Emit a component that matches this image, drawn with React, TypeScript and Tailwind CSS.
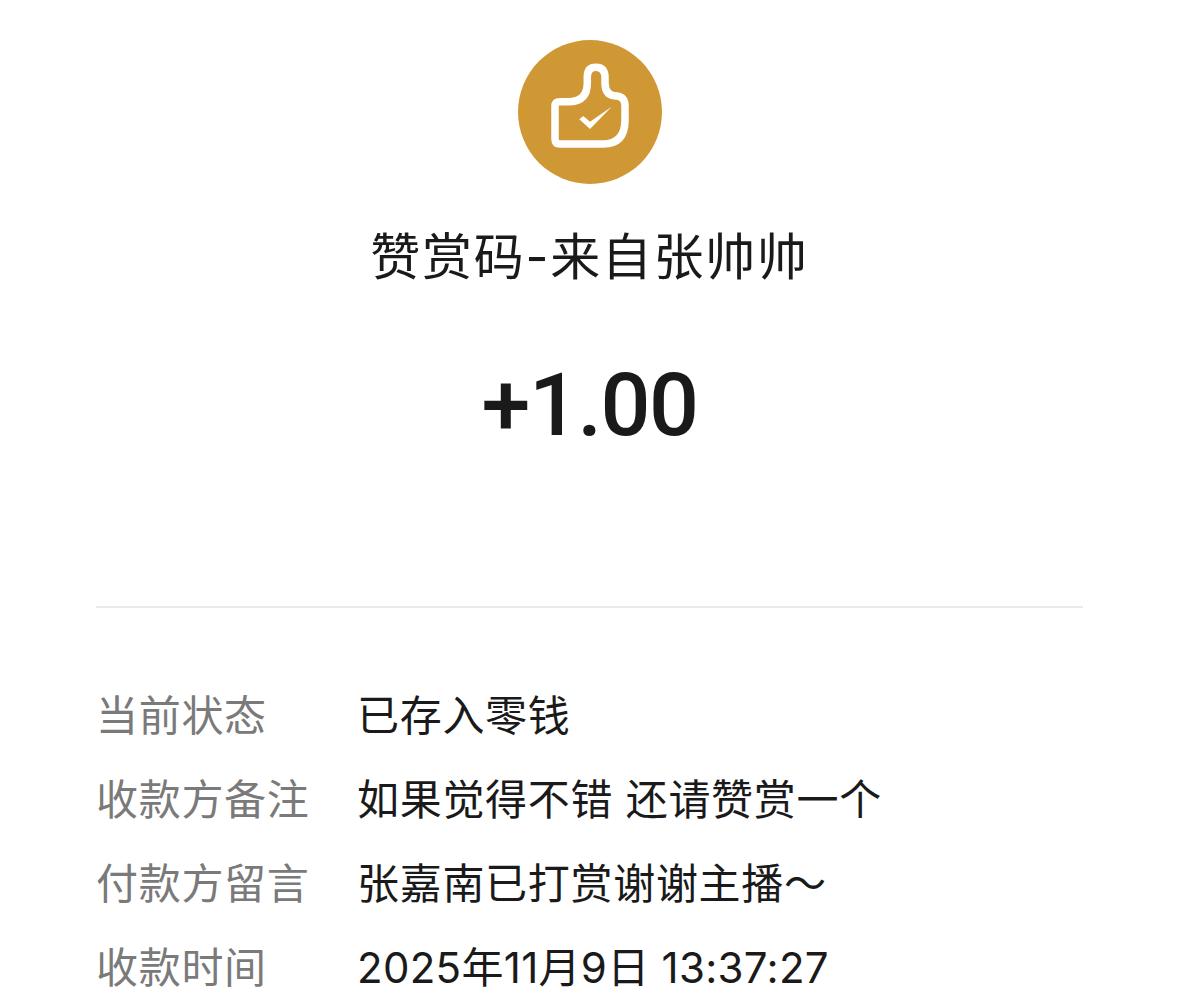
const CJK = "font-['Inter','Noto_Sans_CJK_SC',sans-serif]";

const details = [
  { label: "当前状态", value: "已存入零钱", spacing: "tracking-[0.7px]" },
  { label: "收款方备注", value: "如果觉得不错 还请赞赏一个", spacing: "tracking-[0.7px]" },
  { label: "付款方留言", value: "张嘉南已打赏谢谢主播～", spacing: "tracking-[0.7px]" },
  { label: "收款时间", value: "2025年11月9日 13:37:27", spacing: "tracking-[0.3px]" },
];

function ThumbIcon() {
  return (
    <svg className="shrink-0" width="144" height="144" viewBox="0 0 144 144" aria-hidden="true">
      <circle cx="72" cy="72" r="72" fill="#d09834" />
      <path
        d="M37 99V66Q37 61.7 42 61.7H52Q69.3 61 69.3 43V37Q69.3 27.3 78 27.3T87 37V43Q87 56 99 56Q107 57 107 66V80Q107 104 85 104H42Q37 104 37 99Z"
        fill="none"
        stroke="#fff"
        strokeWidth="7.5"
        strokeLinejoin="round"
      />
      <path d="M61.3 79.3 65.3 76 72 81.7 93.7 66.7 72 89Z" fill="#fff" />
    </svg>
  );
}

export default function App() {
  return (
    <div className={`flex h-[1002px] w-[1179px] flex-col items-center overflow-hidden bg-white pt-10 ${CJK}`}>
      <ThumbIcon />
      <h1 className="mt-[41px] shrink-0 text-[50px] leading-[64px] font-normal tracking-[1.7px] text-[#1a1a1a]">赞赏码-来自张帅帅</h1>
      <div className="mt-[64px] shrink-0 font-['Roboto',sans-serif] text-[88px] leading-[104px] font-medium tracking-[-1.5px] text-[#1a1a1a]">+1.00</div>
      <div className="mt-[149px] h-[2px] w-[987px] shrink-0 bg-[#eaeaea]" />
      <dl className="mt-[66px] flex w-[987px] shrink-0 flex-col text-[42px] leading-[84px] tracking-[0.7px]">
        {details.map((row) => (
          <div key={row.label} className="flex">
            <dt className="w-[261px] text-[#7a7a7a]">{row.label}</dt>
            <dd className={`text-[#1a1a1a] ${row.spacing}`}>{row.value}</dd>
          </div>
        ))}
      </dl>
    </div>
  );
}
